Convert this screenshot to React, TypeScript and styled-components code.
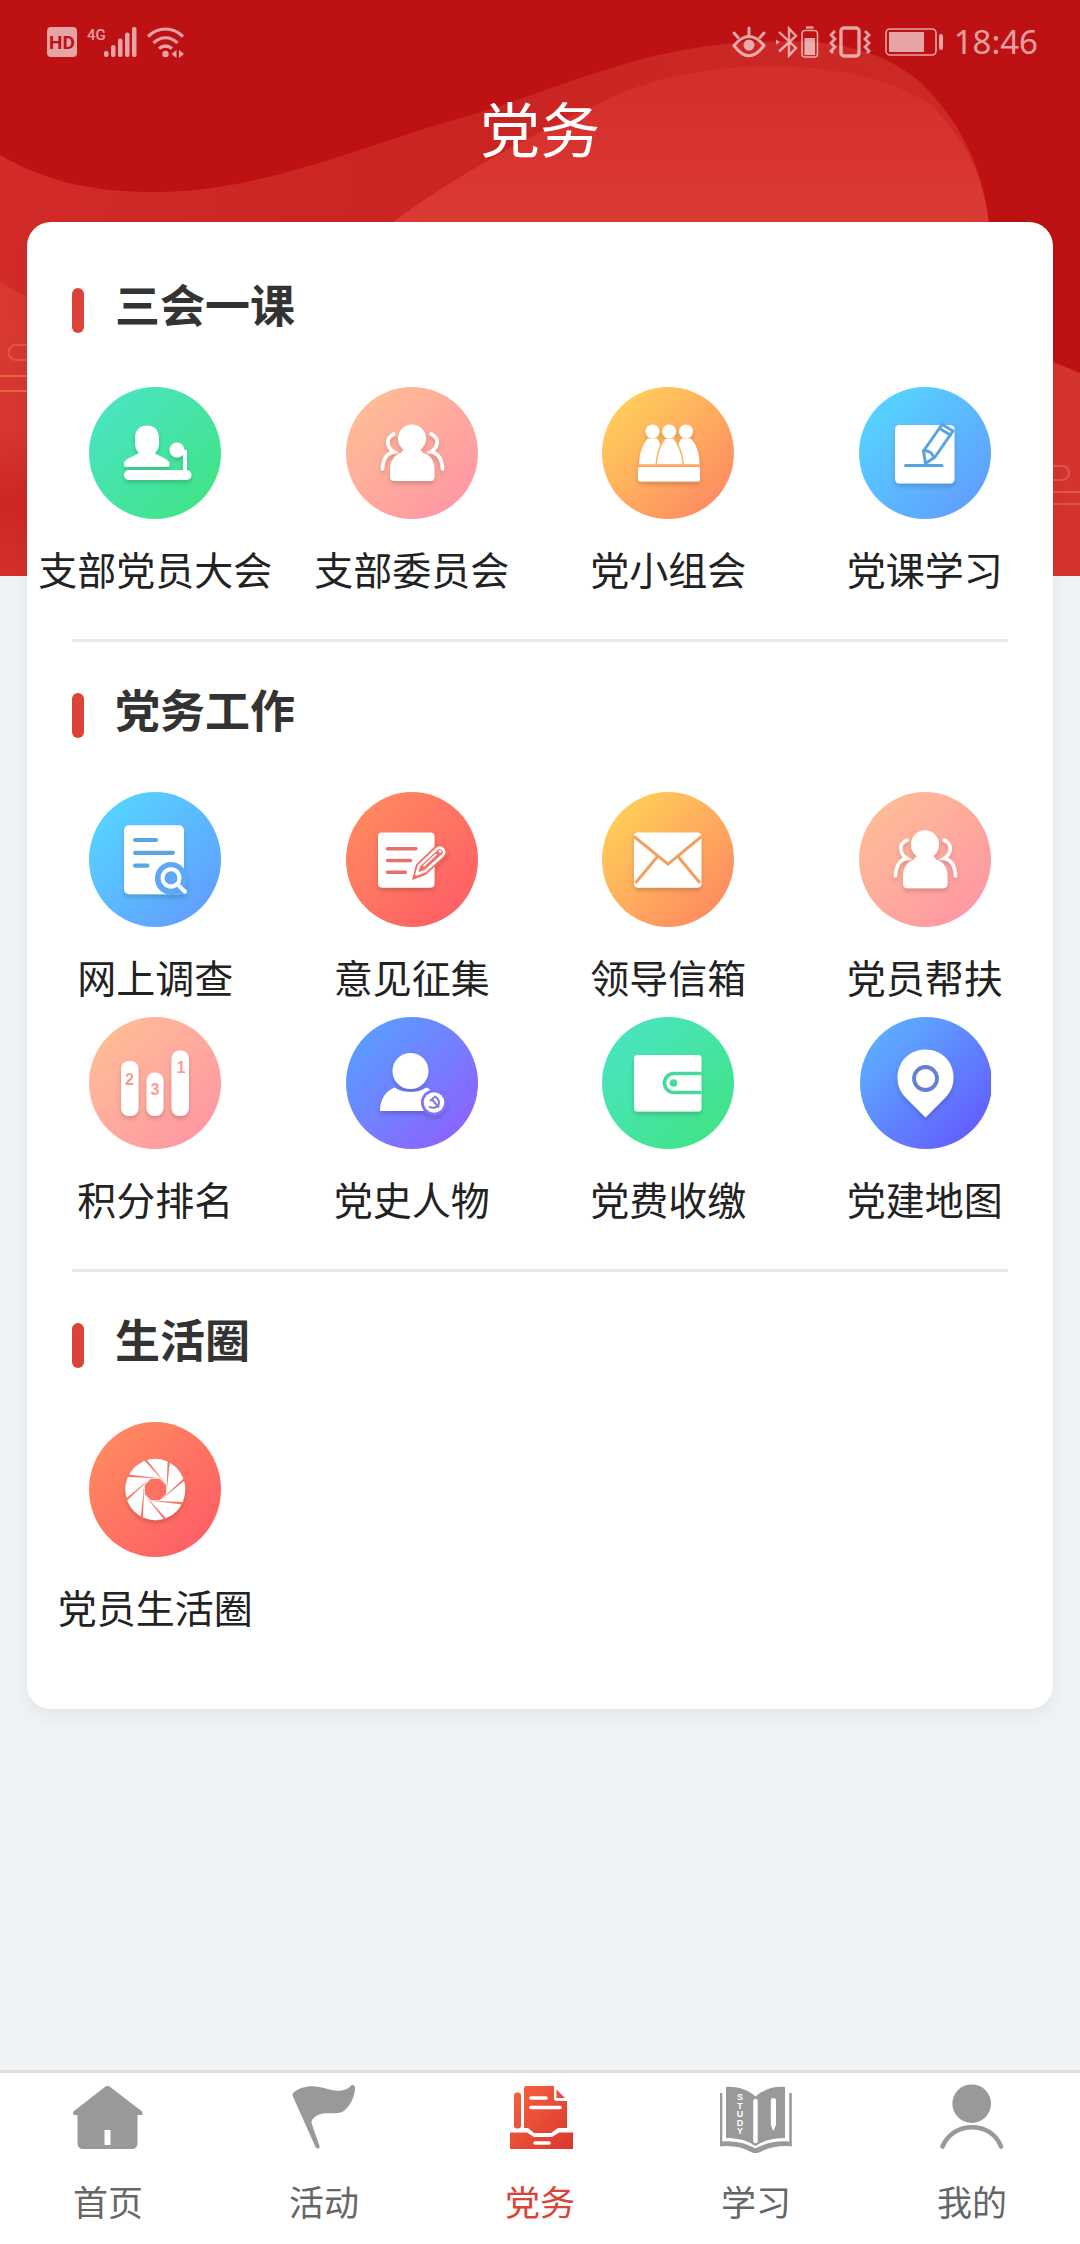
import React from "react";
import styled, { createGlobalStyle, css } from "styled-components";

const GlobalStyle = createGlobalStyle`
  *, *::before, *::after { box-sizing: border-box; }
  body {
    margin: 0;
    background: #eff3f6;
    color: #222;
    font-family: "Noto Sans", "Noto Sans CJK SC", sans-serif;
  }
  button { font: inherit; color: inherit; }
`;

const Page = styled.div`
  position: relative;
  min-height: 100vh;
  display: flex;
  flex-direction: column;
`;

const Backdrop = styled.svg`
  position: absolute;
  top: 0;
  left: 0;
  width: 100%;
  height: 576px;
  z-index: -1;
`;

const StatusBar = styled.div`
  display: flex;
  justify-content: space-between;
  align-items: center;
  height: 84px;
  padding: 0 42px 0 47px;
  color: rgba(255, 255, 255, 0.62);
`;

const StatusGroup = styled.div`
  display: flex;
  align-items: center;
  gap: 10px;
`;

const Clock = styled.time`
  font-size: 33px;
  line-height: 36px;
`;

const PageTitle = styled.h1`
  margin: 0;
  font-size: 60px;
  line-height: 92px;
  font-weight: 400;
  text-align: center;
  color: #fff;
`;

const Card = styled.main`
  margin: 46px 27px 60px;
  padding: 15px 0 32px;
  border-radius: 24px;
  background: #fff;
  box-shadow: 0 6px 18px rgba(0, 0, 0, 0.06);
`;

const Section = styled.section`
  padding: 42px 0 38px;
`;

const Divider = styled.hr`
  height: 3px;
  margin: 0 45px;
  border: 0;
  background: #e8e8e8;
`;

const SectionHeader = styled.div`
  display: flex;
  align-items: flex-end;
  gap: 31px;
  padding-left: 45px;
  margin-bottom: 54px;
`;

const Marker = styled.span`
  width: 12px;
  height: 45px;
  border-radius: 6px;
  background: #dd4238;
`;

const SectionTitle = styled.h2`
  margin: 0;
  font-size: 45px;
  line-height: 54px;
  font-weight: 700;
  color: #333;
`;

const TileGrid = styled.div`
  display: grid;
  grid-template-columns: repeat(4, minmax(0, 1fr));
  row-gap: 8px;
`;

const Tile = styled.button`
  display: flex;
  flex-direction: column;
  align-items: center;
  gap: 20px;
  padding: 0;
  border: 0;
  background: none;
  cursor: pointer;
`;

const Badge = styled.svg<{ $tall?: boolean }>`
  display: block;
  width: 132px;
  height: ${(p) => (p.$tall ? 135 : 132)}px;
`;

const TileLabel = styled.span`
  font-size: 39px;
  line-height: 62px;
  white-space: nowrap;
`;

const TabBar = styled.nav`
  display: grid;
  grid-template-columns: repeat(5, minmax(0, 1fr));
  margin-top: auto;
  border-top: 3px solid #dedede;
  background: #fff;
`;

const Tab = styled.button<{ $active?: boolean }>`
  display: flex;
  flex-direction: column;
  align-items: center;
  gap: 24px;
  padding: 9px 0 16px;
  border: 0;
  background: none;
  cursor: pointer;
  color: #666;
  ${(p) =>
    p.$active &&
    css`
      color: #dd4238;
    `}
`;

const TabIcon = styled.svg`
  display: block;
  width: 72px;
  height: 72px;
`;

const TabLabel = styled.span`
  font-size: 35px;
  line-height: 50px;
`;

type Tone = "green" | "peach" | "orange" | "blue" | "red" | "purple" | "indigo";

const tones: Record<Tone, [string, string]> = {
  green: ["#4be4cb", "#3fe47e"],
  peach: ["#ffc293", "#ff92a6"],
  orange: ["#ffd957", "#ff8064"],
  blue: ["#54dcff", "#6396ff"],
  red: ["#ff8f5f", "#ff5866"],
  purple: ["#52a6ff", "#935aff"],
  indigo: ["#5abcff", "#6450ff"],
};

const Committee = () => (
  <>
    <circle cx="66" cy="51.5" r="14" />
    <path d="M57 63h18l2 3c8 2 11.500 9 11.500 16v8q0 4-4 4H48q-4 0-4-4v-8c0-7 4-14 11-16z" />
    <g fill="none" stroke="#fff" strokeWidth="3.600" strokeLinecap="round">
      <path d="M48 47c-5 2-7 6-6 10 1 5 3 6 6 8-7 1-11 7-11.500 17" />
      <path d="M85 47c5 2 7 6 6 10-1 5-3 6-6 8 7 1 11 7 11.500 17" />
    </g>
  </>
);

const glyphs: Record<string, React.ReactNode> = {
  speaker: (
    <>
      <path d="M46 51c0-8 5-12.500 12-12.500S70 43 70 51v5c0 5-2 8-4 10 1 2 14 6 14.500 10v2q0 2-2 2H37q-2 0-2-2v-2c0-4 13-8 15-10-2-2-4-5-4-10z" />
      <rect x="35" y="83" width="67.500" height="10" rx="5" />
      <circle cx="88" cy="63" r="7.500" />
      <path d="M91 65h5v19" fill="none" stroke="#fff" strokeWidth="4" />
    </>
  ),
  committee: <Committee />,
  group: (
    <>
      <circle cx="50.500" cy="44.500" r="7" />
      <circle cx="84" cy="44.500" r="7" />
      <path d="M37 77.500c0-12 5-22 9-26h9c3 3 4 9 4 26z" />
      <path d="M97.500 77.500c0-12-4-22-9-26h-9c-3 3-4 9-4 26z" />
      <path
        d="M54 78c1-12 5-22 9.500-27h8C76 56 80 66 81.500 78z"
        stroke="#ffb25f"
        strokeWidth="1.500"
      />
      <circle cx="67.200" cy="44.500" r="7" />
      <path d="M36 78.600h62" stroke="#ffad60" strokeWidth="2" />
      <rect x="36" y="80" width="62" height="14.500" rx="2" />
    </>
  ),
  lesson: (
    <>
      <rect x="36" y="38" width="59.500" height="58.500" rx="4.500" />
      <g fill="none" stroke="#59a4e0" strokeWidth="3" strokeLinejoin="round" strokeLinecap="round">
        <path d="M46.500 78.500H83" />
        <path d="M83 37.500l11 6.500-18 26-9.500 6.500-2-12.500z" fill="#fff" />
        <path d="M80.500 41.500l11 6.500M64.500 63.500q8 0 10.500 7" />
      </g>
    </>
  ),
  survey: (
    <>
      <rect x="35" y="32.500" width="60" height="67.500" rx="5" />
      <g stroke="#5da5dc" strokeWidth="4" strokeLinecap="round">
        <path d="M46 47h21M46 59.500h38M46 72h12.500" />
      </g>
      <circle cx="82" cy="84.500" r="16" fill="#5fa8f5" />
      <path d="M83 84l14 16h-15z" fill="#62a6f8" />
      <g fill="none" stroke="#fff" strokeWidth="4" strokeLinecap="round">
        <circle cx="82" cy="84" r="8.500" />
        <path d="M88.500 90.500l7.500 7" />
      </g>
    </>
  ),
  opinion: (
    <>
      <rect x="32" y="39.500" width="56.500" height="54" rx="4" />
      <g stroke="#e86f6b" strokeWidth="3.400" strokeLinecap="round">
        <path d="M41.500 55.500H70M41.500 67h23M41.500 78.500h18" />
      </g>
      <path d="M66 86l4-15 22-21 12 9-24 22z" fill="#f66c62" />
      <path
        d="M70.500 80.500l2.500-8.500 18-16.500q3-2.500 6 .5 2.500 3-.5 6L79 77.500z"
        fill="#f0706a"
        stroke="#fff"
        strokeWidth="2.600"
        strokeLinejoin="round"
      />
      <path d="M78 72l12-11" stroke="#fff" strokeWidth="1.800" strokeLinecap="round" />
      <circle cx="94" cy="58" r="1.400" />
    </>
  ),
  mail: (
    <>
      <rect x="32" y="39.500" width="67.500" height="54" rx="4" />
      <path
        d="M32 43.500l34 27 33.500-27M55.500 63L33.500 89M76 63l22 26"
        fill="none"
        stroke="#f2a05f"
        strokeWidth="3"
      />
    </>
  ),
  ranking: (
    <>
      <rect x="32" y="44" width="17.500" height="55" rx="8" />
      <rect x="57.500" y="55.500" width="17" height="43.500" rx="8" />
      <rect x="82.500" y="33.500" width="17.500" height="65.500" rx="8" />
      <g
        fill="#f79a92"
        fontFamily="Liberation Sans, Arial, sans-serif"
        fontSize="16"
        fontWeight="700"
        textAnchor="middle"
      >
        <text x="40.500" y="68">2</text>
        <text x="66" y="78">3</text>
        <text x="92" y="56">1</text>
      </g>
    </>
  ),
  figure: (
    <>
      <circle cx="64.500" cy="54" r="18" />
      <path d="M34 94c0-12 6-20 14.500-23.500 9 6 23 6 32 0C88 74 94 84 94 94z" />
      <circle cx="88" cy="85.500" r="13" fill="#7d70ff" />
      <circle cx="88" cy="85.500" r="10.300" />
      <g fill="none" stroke="#8278e8" strokeWidth="2">
        <path d="M88 79.500c6 2 7 9 1 11q-3 1-6-1" />
        <path d="M84 84l4-3.500M86 82.500l7 8" />
      </g>
    </>
  ),
  wallet: (
    <>
      <rect x="32" y="38" width="67.500" height="56.500" rx="3.500" />
      <path
        d="M99.500 56.500H72a9.500 9.500 0 0 0 0 19h27.500"
        fill="none"
        stroke="#45d99c"
        strokeWidth="3.600"
      />
      <circle cx="71.500" cy="66" r="3.800" fill="#45d99c" />
    </>
  ),
  pin: (
    <>
      <path d="M66.500 32.500c16 0 28 12 28 28 0 11-5 17-11 23l-17 17-17-17c-6-6-11-12-11-23 0-16 12-28 28-28z" />
      <circle cx="66.500" cy="61.500" r="11.500" fill="none" stroke="#6480d6" strokeWidth="3.800" />
    </>
  ),
  shutter: (
    <>
      <circle cx="66.300" cy="66" r="30" />
      <path
        d="M62 55.500h8.700L77 61.700v8.600l-6.300 6.200H62l-6.200-6.200v-8.600z"
        fill="#fd6f63"
      />
      <g fill="#f4776a">
        {[0, 45, 90, 135, 180, 225, 270, 315].map((a) => (
          <path key={a} d="M55.200 37.500l2.400-.8 19.600 24.500z" transform={`rotate(${a} 66.300 66)`} />
        ))}
      </g>
    </>
  ),
};

interface TileData {
  label: string;
  tone: Tone;
  glyph: string;
  tall?: boolean;
}

const TileBadge = ({ tone, glyph, tall }: TileData) => {
  const id = `${glyph}-${tone}-${tall ? "t" : "s"}`;
  return (
    <Badge $tall={tall} viewBox="0 0 132 132" preserveAspectRatio="none" aria-hidden="true">
      <defs>
        <linearGradient id={id} x1="0" y1="0" x2="1" y2="1">
          <stop offset="0" stopColor={tones[tone][0]} />
          <stop offset="1" stopColor={tones[tone][1]} />
        </linearGradient>
        <filter id={`${id}-shadow`} x="-20%" y="-20%" width="140%" height="150%">
          <feDropShadow dx="0" dy="3" stdDeviation="2" floodColor="#000" floodOpacity="0.16" />
        </filter>
      </defs>
      <circle cx={glyph === "pin" ? 67 : 66} cy="66" r="66" fill={`url(#${id})`} />
      <g fill="#fff" filter={`url(#${id}-shadow)`}>
        {glyphs[glyph]}
      </g>
    </Badge>
  );
};

const sections: { title: string; tiles: TileData[] }[] = [
  {
    title: "三会一课",
    tiles: [
      { label: "支部党员大会", tone: "green", glyph: "speaker" },
      { label: "支部委员会", tone: "peach", glyph: "committee" },
      { label: "党小组会", tone: "orange", glyph: "group" },
      { label: "党课学习", tone: "blue", glyph: "lesson" },
    ],
  },
  {
    title: "党务工作",
    tiles: [
      { label: "网上调查", tone: "blue", glyph: "survey", tall: true },
      { label: "意见征集", tone: "red", glyph: "opinion", tall: true },
      { label: "领导信箱", tone: "orange", glyph: "mail", tall: true },
      { label: "党员帮扶", tone: "peach", glyph: "committee", tall: true },
      { label: "积分排名", tone: "peach", glyph: "ranking" },
      { label: "党史人物", tone: "purple", glyph: "figure" },
      { label: "党费收缴", tone: "green", glyph: "wallet" },
      { label: "党建地图", tone: "indigo", glyph: "pin" },
    ],
  },
  {
    title: "生活圈",
    tiles: [{ label: "党员生活圈", tone: "red", glyph: "shutter", tall: true }],
  },
];

const tabs: { label: string; icon: React.ReactNode; active?: boolean }[] = [
  {
    label: "首页",
    icon: (
      <g fill="#999">
        <path d="M32.500 5.200q3-2.200 6 0L69.500 29q2 2 .5 4h-4.500v28q0 6-6 6h-48q-6 0-6-6V33H2q-2-2 0-4z" />
        <rect x="32.500" y="48" width="6" height="15" fill="#fff" />
      </g>
    ),
  },
  {
    label: "活动",
    icon: (
      <path
        fill="#999"
        d="M4.700 14q-1-2 1-3.500C12 5 22 3 31 5c8 1.500 14 4.500 22 3.500 4-.5 7-1.500 9-4 2-2.500 5-1.500 5 1.500 0 8-5 19-12 23.500-8 4-17-.5-25 3.500-4 2-7 5-6.500 8L31.500 64q.5 2-1 2.500-2 .5-3-1.500z"
      />
    ),
  },
  {
    label: "党务",
    active: true,
    icon: (
      <>
        <defs>
          <linearGradient id="tray" gradientUnits="userSpaceOnUse" x1="8" y1="8" x2="64" y2="64">
            <stop offset="0" stopColor="#f8613f" />
            <stop offset="1" stopColor="#d93a30" />
          </linearGradient>
        </defs>
        <g fill="url(#tray)">
          <rect x="10" y="10.500" width="7" height="36" rx="3" />
          <path d="M20 6q0-2 2-2h28v12q0 3 3 3h10v27H54l-7 5H30l-6-5h-4z" />
          <path d="M52.500 7.500l8.500 8.500h-8.500z" />
          <path d="M6 50.500h17l7 4.500h18l7-4.500h14V67H6z" />
        </g>
        <path
          d="M27 16h15M27 25.500h29M31 61h14"
          stroke="#fff"
          strokeWidth="3.600"
          strokeLinecap="round"
        />
      </>
    ),
  },
  {
    label: "学习",
    icon: (
      <>
        <path
          d="M1 11v52c13-1 24 2 31 6q3.500 1.500 7 0c8-4 18-7 31.500-6V11"
          fill="none"
          stroke="#999"
          strokeWidth="2.600"
        />
        <path
          d="M2 61c13-1 24 2 33.500 7C45 63 56 60 69 61"
          fill="none"
          stroke="#999"
          strokeWidth="3"
        />
        <path
          fill="#999"
          d="M6 5c12-1 22 3 29.500 9.500C43 8 53 4 65 5v51c-11 0-21 2-29.500 8C27 58 17 56 6 56z"
        />
        <path d="M35.500 19v40" stroke="#fff" strokeWidth="4.500" strokeLinecap="round" />
        <path d="M50.800 18q0-2 2.600-2t2.600 2v25l-2.600 6-2.600-6z" fill="#fff" />
        <g
          fill="#fff"
          fontFamily="Liberation Sans, Arial, sans-serif"
          fontWeight="700"
          fontSize="9"
          textAnchor="middle"
        >
          <text x="20" y="18">S</text>
          <text x="20" y="26.500">T</text>
          <text x="20" y="35">U</text>
          <text x="20" y="43.500">D</text>
          <text x="20" y="52">Y</text>
        </g>
      </>
    ),
  },
  {
    label: "我的",
    icon: (
      <>
        <circle cx="35.700" cy="21.700" r="19.300" fill="#999" />
        <path
          d="M6.500 64.500C12 52 23 45.200 36 45.200S60 52 65 64.500"
          fill="none"
          stroke="#999"
          strokeWidth="4.600"
          strokeLinecap="round"
        />
      </>
    ),
  },
];

const HeaderBackdrop = () => (
  <Backdrop viewBox="0 0 1080 576" preserveAspectRatio="none" aria-hidden="true">
    <defs>
      <linearGradient id="wave" x1="0" y1="0" x2="1" y2="0">
        <stop offset="0" stopColor="#d22b29" />
        <stop offset="0.500" stopColor="#c92422" />
        <stop offset="1" stopColor="#cd2a27" />
      </linearGradient>
      <linearGradient id="hill" gradientUnits="userSpaceOnUse" x1="0" y1="66" x2="0" y2="230">
        <stop offset="0" stopColor="#d42d2a" />
        <stop offset="1" stopColor="#dc3b34" />
      </linearGradient>
      <linearGradient id="edge" x1="0" y1="0" x2="0" y2="1">
        <stop offset="0" stopColor="#d8392f" />
        <stop offset="0.500" stopColor="#d63730" />
        <stop offset="0.750" stopColor="#cd2723" />
        <stop offset="1" stopColor="#d4302b" />
      </linearGradient>
    </defs>
    <rect width="1080" height="576" fill="#be1113" />
    <path
      d="M0 155C50 184 100 193 165 192C270 188 350 150 460 118C560 90 640 45 760 42C830 38 880 48 920 82C965 125 988 180 990 240V576H0z"
      fill="url(#wave)"
    />
    <path
      d="M380 232C440 185 520 140 600 103C650 78 710 66 770 66C840 66 900 82 932 106C965 140 988 180 990 240z"
      fill="url(#hill)"
    />
    <path d="M0 282Q14 292 40 301V576H0z" fill="url(#edge)" />
    <path d="M1040 358Q1060 364 1080 373V576H1040z" fill="#d4342f" />
    <g fill="none" strokeWidth="2">
      <path d="M40 345H16a7.500 7.500 0 0 0 0 15h24" stroke="#e0554a" />
      <path d="M0 376h40M0 391h40" stroke="#e8663f" />
      <path d="M1040 466h22a7 7 0 0 1 0 14h-22M1040 492h40M1040 504h40" stroke="#df544c" />
    </g>
  </Backdrop>
);

const Status = () => (
  <StatusBar>
    <StatusGroup>
      <svg width="30" height="30" viewBox="0 0 30 30" aria-hidden="true">
        <rect width="30" height="30" rx="4" fill="currentColor" />
        <text
          x="15"
          y="22"
          fontFamily="Roboto, sans-serif"
          fontWeight="700"
          fontSize="19"
          textAnchor="middle"
          fill="#be1113"
        >
          HD
        </text>
      </svg>
      <svg width="50" height="32" viewBox="0 0 50 32" fill="currentColor" aria-hidden="true">
        <text x="0" y="14" fontFamily="Roboto, sans-serif" fontSize="15" fontWeight="500">
          4G
        </text>
        <rect x="17" y="25" width="4.500" height="6" rx="2" />
        <rect x="24" y="19" width="4.500" height="12" rx="2" />
        <rect x="31" y="12.500" width="4.500" height="18.500" rx="2" />
        <rect x="38" y="6.500" width="4.500" height="24.500" rx="2" />
        <rect x="45" y="1" width="4.500" height="30" rx="2" />
      </svg>
      <svg
        width="37"
        height="32"
        viewBox="0 0 37 32"
        fill="none"
        stroke="currentColor"
        strokeWidth="3.200"
        aria-hidden="true"
      >
        <path d="M1 10.500C11 .5 26 .5 36 10.500M6.500 17c7-7 17-7 24 0M12 22.500q6.500-5 13 0" />
        <circle cx="18.500" cy="28" r="3.200" fill="currentColor" stroke="none" />
        <path d="M29.500 24v8l-5-4zM32 24v8l5-4z" fill="currentColor" stroke="none" />
      </svg>
    </StatusGroup>
    <StatusGroup>
      <svg
        width="34"
        height="32"
        viewBox="0 0 34 32"
        fill="none"
        stroke="currentColor"
        strokeWidth="3"
        strokeLinecap="round"
        aria-hidden="true"
      >
        <path d="M2 19.500Q17 1.500 32 19.500Q17 40 2 19.500z" strokeLinejoin="round" />
        <path d="M2 7l4 4.500M17 2v6M32 7l-4 4.500" />
        <circle cx="17" cy="19" r="5.500" fill="currentColor" stroke="none" />
      </svg>
      <svg
        width="43"
        height="32"
        viewBox="0 0 43 32"
        fill="none"
        stroke="currentColor"
        strokeWidth="2.400"
        aria-hidden="true"
      >
        <path d="M3 6l17 16-7 7.500V2.500L20 10 3 25.500" />
        <path d="M0 13.500l4 2.500-4 2.500z" fill="currentColor" stroke="none" />
        <rect x="26" y="4.500" width="15.500" height="26.500" rx="3" strokeWidth="1.600" />
        <path d="M30 1.500h7.500" />
        <rect x="28.500" y="12" width="10.500" height="17" fill="currentColor" stroke="none" />
      </svg>
      <svg
        width="45"
        height="32"
        viewBox="0 0 45 32"
        fill="none"
        stroke="currentColor"
        strokeWidth="2.800"
        aria-hidden="true"
      >
        <rect x="12" y="2" width="18" height="28" rx="3" strokeWidth="3.400" />
        <path d="M6 5l-4 4 4 4-4 4 4 4-4 4 2 2M36 5l4 4-4 4 4 4-4 4 4 4-2 2" />
      </svg>
      <svg width="60" height="28" viewBox="0 0 60 28" aria-hidden="true">
        <rect x="2" y="1" width="50" height="26" rx="4" fill="none" stroke="currentColor" strokeWidth="1.600" />
        <rect x="5" y="4" width="35" height="20" rx="1" fill="currentColor" />
        <rect x="55" y="6" width="4" height="16" rx="2" fill="currentColor" />
      </svg>
      <Clock>18:46</Clock>
    </StatusGroup>
  </StatusBar>
);

export default function App() {
  return (
    <>
      <GlobalStyle />
      <Page>
        <HeaderBackdrop />
        <header>
          <Status />
          <PageTitle>党务</PageTitle>
        </header>
        <Card>
          {sections.map((section, i) => (
            <React.Fragment key={section.title}>
              {i > 0 && <Divider />}
              <Section>
                <SectionHeader>
                  <Marker />
                  <SectionTitle>{section.title}</SectionTitle>
                </SectionHeader>
                <TileGrid>
                  {section.tiles.map((tile) => (
                    <Tile key={tile.label} type="button">
                      <TileBadge {...tile} />
                      <TileLabel>{tile.label}</TileLabel>
                    </Tile>
                  ))}
                </TileGrid>
              </Section>
            </React.Fragment>
          ))}
        </Card>
        <TabBar>
          {tabs.map((tab) => (
            <Tab
              key={tab.label}
              type="button"
              $active={tab.active}
              aria-current={tab.active ? "page" : undefined}
            >
              <TabIcon viewBox="0 0 72 72" aria-hidden="true">
                {tab.icon}
              </TabIcon>
              <TabLabel>{tab.label}</TabLabel>
            </Tab>
          ))}
        </TabBar>
      </Page>
    </>
  );
}
